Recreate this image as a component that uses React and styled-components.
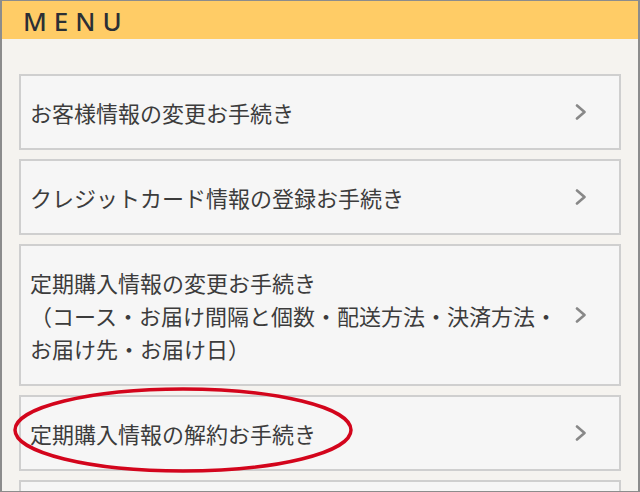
import React from 'react';
import styled, { createGlobalStyle } from 'styled-components';

const GlobalStyle = createGlobalStyle`
  html, body {
    margin: 0;
    padding: 0;
    background: #f4f2ee;
  }
  body {
    font-family: "Noto Sans CJK JP", "Noto Sans", sans-serif;
  }
`;

const Screen = styled.div`
  position: relative;
  box-sizing: border-box;
  width: 640px;
  height: 492px;
  overflow: hidden;
  border-top: 1px solid #8c8c8c;
  border-bottom: 1px solid #8c8c8c;
  border-left: 2px solid #8c8c8c;
  border-right: 2px solid #8c8c8c;
  background: #f5f3ef;
`;

const Header = styled.header`
  height: 38px;
  background: #ffcc66;
  display: flex;
  align-items: center;
  padding-left: 21px;
`;

const Title = styled.h1`
  margin: 0;
  font-family: "Noto Sans", "Open Sans", sans-serif;
  font-size: 26px;
  font-weight: 500;
  letter-spacing: 7px;
  color: #2b2f35;
  line-height: 1;
  padding-top: 2px;
`;

const List = styled.ul`
  list-style: none;
  margin: 0;
  padding: 35px 17px 0 17px;
  display: flex;
  flex-direction: column;
  gap: 9px;
`;

const Item = styled.li`
  box-sizing: border-box;
  display: flex;
  align-items: center;
  justify-content: space-between;
  min-height: 76px;
  background: #f6f6f6;
  border: 2px solid #cfcfcf;
  padding: 19.5px 32px 19.5px 9px;
  flex-shrink: 0;
`;

const Label = styled.span`
  font-size: 22px;
  font-weight: 400;
  line-height: 33px;
  color: #3c3c3c;
`;

const Chevron = () => (
  <svg width="12" height="16" viewBox="0 0 12 16" aria-hidden="true">
    <path
      d="M2 1.5 L9.5 8 L2 14.5"
      fill="none"
      stroke="#888"
      strokeWidth="2.6"
      strokeLinecap="round"
      strokeLinejoin="round"
    />
  </svg>
);

const Circle = styled.svg`
  position: absolute;
  left: 9px;
  top: 385px;
  pointer-events: none;
`;

const items = [
  ['お客様情報の変更お手続き'],
  ['クレジットカード情報の登録お手続き'],
  [
    '定期購入情報の変更お手続き',
    '（コース・お届け間隔と個数・配送方法・決済方法・',
    'お届け先・お届け日）',
  ],
  ['定期購入情報の解約お手続き'],
  [],
];

export default function App() {
  return (
    <>
      <GlobalStyle />
      <Screen>
        <Header>
          <Title>MENU</Title>
        </Header>
        <List>
          {items.map((lines, i) => (
            <Item key={i}>
              <Label>
                {lines.map((l, j) => (
                  <React.Fragment key={j}>
                    {j > 0 && <br />}
                    {l}
                  </React.Fragment>
                ))}
              </Label>
              <Chevron />
            </Item>
          ))}
        </List>
        <Circle width="346" height="90" viewBox="0 0 346 90">
          <ellipse
            cx="172"
            cy="44"
            rx="168"
            ry="41"
            fill="none"
            stroke="#d3051c"
            strokeWidth="3.5"
          />
        </Circle>
      </Screen>
    </>
  );
}
